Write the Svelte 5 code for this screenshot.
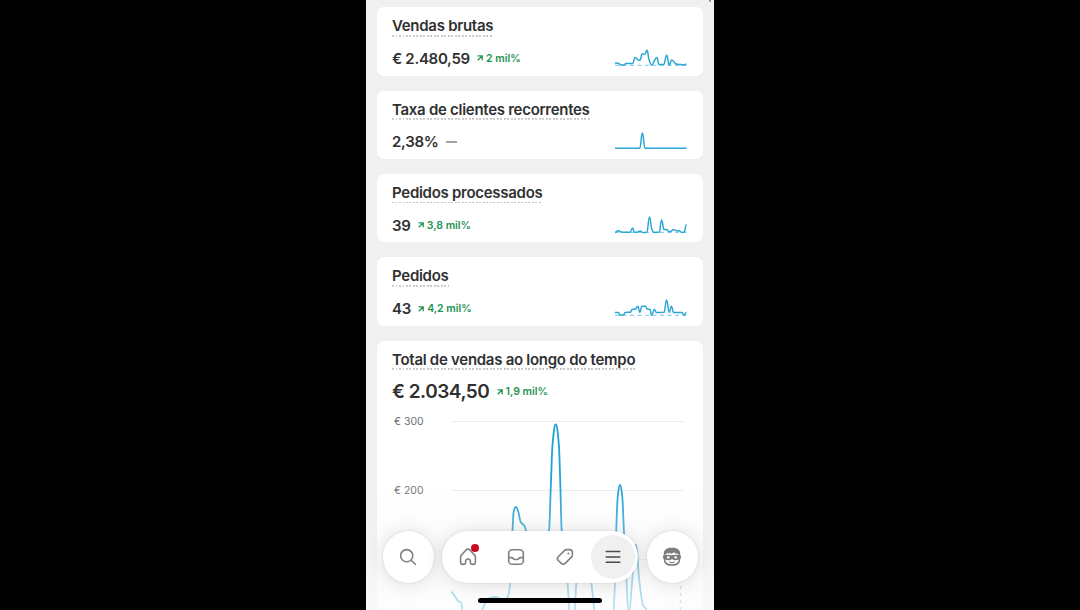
<script lang="ts">
	type Point = [number, number];

	type Metric = {
		title: string;
		value: string;
		trend: string | null;
		compare: boolean;
		points: Point[];
	};

	const metrics: Metric[] = [
		{
			title: 'Vendas brutas',
			value: '€ 2.480,59',
			trend: '2 mil%',
			compare: true,
			points: [
				[0, 15], [3.5, 15.4], [6.5, 17], [9, 17], [11, 15.4], [17.7, 15.4], [20, 9.5], [24, 12.3],
				[25.5, 11.5], [27, 6], [30, 6], [32, 2.2], [34, 11.5], [36.7, 17], [39, 13.5], [42, 9.5],
				[44, 16.5], [49, 16.3], [51.7, 7.2], [54.2, 17], [56.7, 12], [61, 16], [66, 16.6],
				[69, 17], [71.5, 16]
			]
		},
		{
			title: 'Taxa de clientes recorrentes',
			value: '2,38%',
			trend: null,
			compare: false,
			points: [[0, 17.2], [24.7, 17.2], [27.4, 2], [30, 17.2], [71.5, 17.2]]
		},
		{
			title: 'Pedidos processados',
			value: '39',
			trend: '3,8 mil%',
			compare: true,
			points: [
				[0, 17.5], [3, 15.7], [7, 17.2], [15, 17.2], [17.6, 13], [19.5, 17.2], [22, 17.2], [25, 16],
				[28, 17.4], [32, 17.2], [34.6, 2], [36.5, 13], [39, 17.4], [44.5, 17], [46.6, 5],
				[48.8, 14.3], [52, 14.8], [55, 16.8], [58.5, 14.7], [61, 15.5], [65, 16.2], [67, 17.4],
				[69.4, 17], [71.5, 9.5]
			]
		},
		{
			title: 'Pedidos',
			value: '43',
			trend: '4,2 mil%',
			compare: true,
			points: [
				[0, 14.4], [3.5, 14.4], [5, 17], [8.5, 17], [10, 14.4], [15.5, 14.2], [17, 11.4], [20.5, 11.2],
				[22.8, 8.2], [24.8, 14.2], [27, 8.2], [30.5, 8.2], [32, 11], [35, 11.4], [36.7, 17.2],
				[39.3, 11.4], [41.5, 14.4], [49.3, 14.2], [51.6, 2], [54.2, 14.2], [56.4, 8.2], [58.6, 14.4],
				[67, 14.4], [69, 17.2], [71.5, 14.2]
			]
		}
	];

	const sales: Point[] = [
		[74, 184], [77.5, 187.5], [81, 193], [84, 194.5], [88, 214], [100, 214], [105, 202],
		[112, 190], [118, 189], [128, 192], [131.5, 187], [133.3, 173], [135.5, 123], [136.6, 104],
		[138.7, 99], [141.2, 103.5], [143.7, 114], [147.5, 118], [149.8, 126], [158, 154], [167, 154],
		[172.2, 121], [173.9, 76], [175.5, 37], [178.7, 16.5], [181.9, 37], [183.3, 76], [184.6, 121],
		[190.5, 175], [194, 214], [197, 214], [199.3, 175], [206, 140], [214.3, 175], [220, 214],
		[235, 214], [238, 175], [239.3, 121], [240.7, 89], [243, 77], [245.3, 89], [246.8, 121],
		[249.6, 175], [251.6, 206], [255, 175], [259, 137], [262, 170], [266, 197], [270, 201]
	];

	// monotone cubic with longer handles on flat tangents, so peaks stay round
	const smooth = (pts: Point[]) => {
		const slope = pts.slice(1).map(([x, y], i) => (y - pts[i][1]) / (x - pts[i][0]));
		const tan = pts.map((_, i) => {
			const a = slope[i - 1];
			const b = slope[i];
			if (a === undefined || b === undefined || a * b <= 0) return 0;
			return (2 * a * b) / (a + b);
		});
		let d = `M${pts[0][0]} ${pts[0][1]}`;
		for (let i = 1; i < pts.length; i++) {
			const [x0, y0] = pts[i - 1];
			const [x1, y1] = pts[i];
			const h0 = (x1 - x0) * (tan[i - 1] ? 0.33 : 0.5);
			const h1 = (x1 - x0) * (tan[i] ? 0.33 : 0.5);
			d += `C${x0 + h0} ${y0 + tan[i - 1] * h0} ${x1 - h1} ${y1 - tan[i] * h1} ${x1} ${y1}`;
		}
		return d;
	};
</script>

{#snippet trendBadge(text: string)}
	<span class="trend">
		<svg width="6" height="6" viewBox="0 0 6 6" fill="none">
			<path d="M0.6 0.8H5.2V5.2M5 1L0.8 5.2" stroke="currentColor" stroke-width="1.3" />
		</svg>
		{text}
	</span>
{/snippet}

<div class="stage">
	<main class="phone">
		<span class="scroll-mark"></span>

		<div class="cards">
			{#each metrics as metric (metric.title)}
				<section class="card">
					<h2 class="card__title">{metric.title}</h2>
					<div class="card__row">
						<span class="card__value">{metric.value}</span>
						{#if metric.trend}
							{@render trendBadge(metric.trend)}
						{:else}
							<span class="dash"></span>
						{/if}
						<svg class="spark" width="72" height="20" viewBox="0 0 72 20" fill="none">
							{#if metric.compare}
								<path d="M0 17.4H71.5" stroke="#8fd0ea" stroke-width="1.2" stroke-dasharray="4 3.5" />
							{/if}
							<path d={smooth(metric.points)} stroke="#2ba6d6" stroke-width="1.5" />
						</svg>
					</div>
				</section>
			{/each}

			<section class="card card--chart">
				<h2 class="card__title">Total de vendas ao longo do tempo</h2>
				<div class="card__row card__row--big">
					<span class="card__value card__value--big">€ 2.034,50</span>
					{@render trendBadge('1,9 mil%')}
				</div>
				<svg class="chart" width="326" height="202" viewBox="0 0 326 202" fill="none">
					<path d="M74 13.5H307M74 82.5H307M74 151.5H307" stroke="#ededed" />
					<text x="17" y="17">€ 300</text>
					<text x="17" y="86">€ 200</text>
					<path d={smooth(sales)} stroke="#1fa3d6" stroke-width="1.8" />
					<path d="M303.5 150V202" stroke="#5fbde0" stroke-width="1.5" stroke-dasharray="3 4" />
				</svg>
			</section>
		</div>

		<div class="fade"></div>

		<nav class="dock">
			<button class="dock__round" type="button" aria-label="Pesquisar">
				<svg width="20" height="20" viewBox="0 0 20 20" fill="none" class="icon">
					<circle cx="8.7" cy="8.7" r="6.1" />
					<path d="M13.2 13.2L17.5 17.5" />
				</svg>
			</button>

			<div class="dock__pill">
				<button class="dock__item" type="button" aria-label="Início">
					<svg width="20" height="20" viewBox="0 0 20 20" fill="none" class="icon">
						<path
							d="M2.6 10.4C2.6 9.5 2.9 8.7 3.5 8L8.2 2.9C9.2 1.8 10.8 1.8 11.8 2.9L16.5 8C17.1 8.7 17.4 9.5 17.4 10.4V15.2C17.4 16.6 16.6 17.4 15.2 17.4H14C13 17.4 12.4 16.8 12.4 15.8V14.2C12.4 11.4 7.6 11.4 7.6 14.2V15.8C7.6 16.8 7 17.4 6 17.4H4.8C3.4 17.4 2.6 16.6 2.6 15.2Z"
						/>
					</svg>
					<span class="badge"></span>
				</button>
				<button class="dock__item" type="button" aria-label="Pedidos">
					<svg width="20" height="20" viewBox="0 0 20 20" fill="none" class="icon">
						<rect x="2.7" y="2.7" width="14.6" height="14.6" rx="3.4" />
						<path d="M2.7 10.6H5.6C6.3 10.6 6.8 10.9 7.2 11.5C7.6 12.2 8.1 12.5 8.8 12.5H11.2C11.9 12.5 12.4 12.2 12.8 11.5C13.2 10.9 13.7 10.6 14.4 10.6H17.3" />
					</svg>
				</button>
				<button class="dock__item" type="button" aria-label="Produtos">
					<svg width="20" height="20" viewBox="0 0 20 20" fill="none" class="icon">
						<path
							d="M9.6 3.4C10.1 2.9 10.8 2.6 11.5 2.6H14.6C16.2 2.6 17.4 3.8 17.4 5.4V8C17.4 8.7 17.1 9.4 16.6 9.9L10.2 16.4C9.1 17.5 7.4 17.5 6.3 16.4L3.3 13.5C2.2 12.4 2.2 10.8 3.3 9.7Z"
						/>
						<circle cx="13.4" cy="6.6" r="1" class="icon__dot" />
					</svg>
				</button>
				<button class="dock__item dock__item--active" type="button" aria-label="Menu">
					<svg width="20" height="20" viewBox="0 0 20 20" fill="none" class="icon icon--dark">
						<path d="M3.2 4.6H16.8M3.2 9.9H16.8M3.2 15.2H16.8" />
					</svg>
				</button>
			</div>

			<button class="dock__round" type="button" aria-label="Perfil">
				<svg width="20" height="20" viewBox="0 0 20 20" fill="none">
					<path
						d="M10 0.8C5 0.8 1.8 2.8 1.8 6.4V8C0.7 8.4 0.7 11.6 1.8 12.2C1.8 16.6 4.4 18.8 10 18.8S18.2 16.6 18.2 12.2C19.3 11.6 19.3 8.4 18.2 8V6.4C18.2 2.8 15 0.8 10 0.8Z"
						fill="#7d7d7d"
					/>
					<path
						d="M3.4 8V6.9C4.5 7 5.2 6.6 5.8 5.8L6.5 7L8 5.6L8.6 6.8C10 6.6 11 6 11.8 5.2C12.8 6.3 14.6 6.9 16.6 6.9V8C14.2 7.3 12 8.2 10 8.2S5.8 7.3 3.4 8Z"
						fill="#fff"
					/>
					<path
						d="M3.3 12.6C5.6 13.9 8.4 13.4 10 12C11.6 13.4 14.4 13.9 16.7 12.6C16.5 15.9 14 17.2 10 17.2S3.5 15.9 3.3 12.6Z"
						fill="#fff"
					/>
					<ellipse cx="6.3" cy="10.4" rx="1.5" ry="1.1" fill="#fff" />
					<ellipse cx="13.7" cy="10.4" rx="1.5" ry="1.1" fill="#fff" />
					<path d="M8 14.9C9.2 15.7 10.8 15.7 12 14.9" stroke="#7d7d7d" stroke-width="1.2" stroke-linecap="round" />
				</svg>
			</button>
		</nav>

		<span class="home-bar"></span>
	</main>
</div>

<style>
	:global(body) {
		margin: 0;
		background: #000;
	}

	.stage {
		display: flex;
		justify-content: center;
		height: 610px;
		background: #000;
		font-family: Inter, 'Liberation Sans', sans-serif;
		color: #303030;
	}

	.phone {
		position: relative;
		width: 348px;
		height: 610px;
		overflow: hidden;
		background: #f0f0f0;
	}

	.scroll-mark {
		position: absolute;
		top: -1px;
		right: 3px;
		width: 2px;
		height: 3px;
		border-radius: 1px;
		background: #8c8c8c;
	}

	.cards {
		display: flex;
		flex-direction: column;
		gap: 15px;
		padding: 7.2px 11px 0;
	}

	.card {
		box-sizing: border-box;
		flex: none;
		height: 68.4px;
		padding: 9px 16px 0 15px;
		border-radius: 7px;
		background: #fff;
	}

	.card--chart {
		height: 290px;
		padding-right: 0;
	}

	.card__title {
		width: fit-content;
		height: 20.5px;
		margin: 0;
		font-size: 15px;
		font-weight: 600;
		line-height: 20px;
		letter-spacing: -0.28px;
		white-space: nowrap;
		background: repeating-linear-gradient(90deg, #c6c6c6 0 1.8px, transparent 1.8px 3.5px) left bottom / 100%
			1.8px no-repeat;
	}

	.card__row {
		display: flex;
		align-items: center;
		height: 20px;
		margin-top: 11.8px;
	}

	.card__row--big {
		height: 24px;
		margin-top: 9.7px;
	}

	.card__value {
		font-size: 15px;
		font-weight: 600;
		letter-spacing: -0.3px;
		white-space: nowrap;
	}

	.card__value--big {
		font-size: 19px;
		letter-spacing: -0.47px;
	}

	.trend {
		display: flex;
		align-items: center;
		gap: 3px;
		margin-left: 7.2px;
		font-size: 10.5px;
		font-weight: 600;
		color: #1f9254;
		white-space: nowrap;
	}

	.dash {
		width: 11px;
		height: 2px;
		margin-left: 8px;
		background: #a3a3a3;
	}

	.spark {
		margin: -1px 0 0 auto;
	}

	.chart {
		display: block;
		margin: 4px 0 0 -15px;
	}

	.chart text {
		font-size: 10.5px;
		fill: #707070;
	}

	.fade {
		position: absolute;
		inset: auto 0 0;
		height: 130px;
		background: linear-gradient(
			rgba(250, 250, 250, 0),
			rgba(246, 246, 246, 0.25) 50px,
			rgba(250, 250, 250, 0.6) 95px,
			rgba(252, 252, 252, 0.7)
		);
	}

	.dock {
		position: absolute;
		left: 16.5px;
		right: 16px;
		bottom: 27px;
		display: flex;
		justify-content: space-between;
	}

	.dock button {
		display: flex;
		align-items: center;
		justify-content: center;
		padding: 0;
		border: none;
		cursor: pointer;
	}

	.dock__round,
	.dock__pill {
		height: 52px;
		border-radius: 26px;
		background: #fff;
		box-shadow:
			0 0 3px rgba(0, 0, 0, 0.1),
			0 1px 20px rgba(0, 0, 0, 0.13);
	}

	.dock__round {
		width: 51.5px;
	}

	.dock__pill {
		display: flex;
		align-items: center;
		justify-content: space-between;
		box-sizing: border-box;
		width: 196px;
		padding: 0 3px 0 3.5px;
	}

	.dock__item {
		position: relative;
		width: 44.5px;
		height: 44.5px;
		border-radius: 50%;
		background: transparent;
	}

	.dock__item--active {
		background: #f0f0f0;
	}

	.icon {
		stroke: #808080;
		stroke-width: 1.6;
		stroke-linecap: round;
		stroke-linejoin: round;
	}

	.icon--dark {
		stroke: #4a4a4a;
		stroke-width: 1.5;
	}

	.icon__dot {
		fill: #808080;
		stroke: none;
	}

	.badge {
		position: absolute;
		top: 9.5px;
		right: 11px;
		width: 8px;
		height: 8px;
		border-radius: 50%;
		background: #c70a24;
	}

	.home-bar {
		position: absolute;
		left: 112px;
		bottom: 7px;
		width: 124px;
		height: 5px;
		border-radius: 3px;
		background: #000;
	}
</style>
